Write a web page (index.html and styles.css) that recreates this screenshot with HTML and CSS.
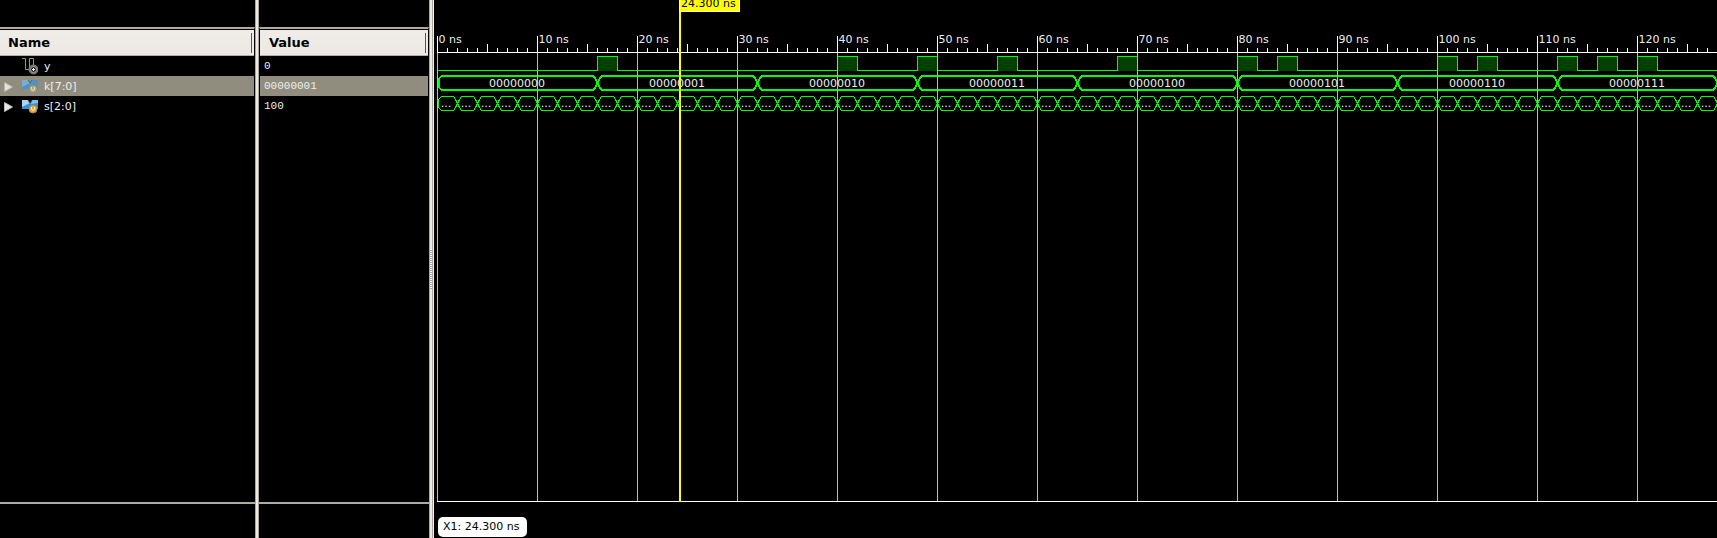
FILE: index.html
```
<!DOCTYPE html>
<html lang="en">
<head>
<meta charset="utf-8">
<title>Waveform viewer</title>
<link rel="stylesheet" href="styles.css">
</head>
<body>
<main class="viewer">
  <section class="pane names">
    <h2 class="head">Name</h2>
    <ul class="rows">
      <li class="row">
        <span class="twist"></span>
        <svg class="icon" width="16" height="18" viewBox="0 0 16 18"><path d="M0 1.500H3.500V12.500H7.500V1.500H11.500V9" fill="none" stroke="#6fae5c"/><circle cx="11.500" cy="12.500" r="4.500" fill="#666" stroke="#888"/><circle cx="11.500" cy="12.500" r="3" fill="#222" stroke="#aaa"/><path d="M10 12.500H13M11.500 11V14" stroke="#fff"/></svg>
        <span class="label">y</span>
      </li>
      <li class="row selected">
        <button class="twist" aria-label="Expand k"><svg width="9" height="10" viewBox="0 0 9 10"><path d="M.5 .5L8.500 5L.5 9.500Z" fill="#e4e2de" stroke="#bbb8b0"/></svg></button>
        <svg class="icon" width="16" height="18" viewBox="0 0 16 18"><path d="M0 3H6L8 6L10 3H16V12H0Z" fill="#4f93c4"/><path d="M0 3H6L8 6L0 10Z" fill="#79aed2"/><path d="M6 3L8 6L10 3" fill="none" stroke="#456a80"/><circle cx="11" cy="12" r="4" fill="#b3a678" stroke="#8b8d87"/><path d="M9.500 10V12.500Q11 14.500 12.500 12.500V10" fill="none" stroke="#e2ddc5"/></svg>
        <span class="label">k[7:0]</span>
      </li>
      <li class="row">
        <button class="twist" aria-label="Expand s"><svg width="9" height="10" viewBox="0 0 9 10"><path d="M.5 .5L8.500 5L.5 9.500Z" fill="#e8e8e8" stroke="#bbb"/></svg></button>
        <svg class="icon" width="16" height="18" viewBox="0 0 16 18"><path d="M0 3H6L8 6L10 3H16V12H0Z" fill="#2f8fd8"/><path d="M0 3H6L8 6L0 10Z" fill="#a8d5f2"/><path d="M10 3H16V6L9 7Z" fill="#7cc0ee"/><path d="M6 3L8 6L10 3" fill="none" stroke="#235"/><circle cx="11" cy="12" r="4" fill="#e3a93a" stroke="#a08a5c"/><path d="M9.500 10V12.500Q11 14.500 12.500 12.500V10" fill="none" stroke="#fff4cd"/></svg>
        <span class="label">s[2:0]</span>
      </li>
    </ul>
    <div class="foot"></div>
  </section>
  <div class="splitter"></div>
  <section class="pane values">
    <h2 class="head">Value</h2>
    <ul class="rows">
      <li class="row">0</li>
      <li class="row selected">00000001</li>
      <li class="row">100</li>
    </ul>
    <div class="foot"></div>
  </section>
  <div class="splitter grip"></div>
  <section class="wave">
    <svg class="plot" id="plot" role="img" aria-label="Signal waveforms"></svg>
    <div class="status"><span class="marker">X1: 24.300 ns</span></div>
  </section>
</main>
<script src="wave.js"></script>
</body>
</html>
```
FILE: styles.css
```
body {
  margin: 0;
  background: #000;
  color: #eee;
  font-family: "DejaVu Sans", sans-serif;
  font-size: 11px;
}
.viewer {
  display: flex;
  height: 100vh;
  overflow: hidden;
}
.pane {
  display: flex;
  flex-direction: column;
  box-sizing: border-box;
  padding-top: 27px;
}
.names { flex: 0 0 255px; }
.values { flex: 0 0 170px; }
.head {
  box-sizing: border-box;
  height: 29px;
  margin: 0;
  padding-left: 8px;
  border-top: 2px solid #b0aaa2;
  background:
    linear-gradient(#555, #555) right 2px top 4px / 1px 20px no-repeat,
    linear-gradient(#000, #000) top / 100% 1px no-repeat,
    linear-gradient(#b4aea6, #b4aea6) bottom / 100% 1px no-repeat,
    linear-gradient(#f0ede9, #ece9e4);
  border-right: 1px solid #000;
  color: #000;
  font-size: 13px;
  line-height: 27px;
}
.values .head {
  border-left: 1px solid #000;
  padding-left: 9px;
}
.rows {
  flex: 1;
  margin: 0;
  padding: 0;
  list-style: none;
}
.row {
  display: flex;
  align-items: center;
  height: 20px;
  margin-right: 1px;
}
.values .row {
  margin-left: 1px;
  padding-left: 4px;
  font-family: "Liberation Mono", monospace;
}
.selected { background: #918d7e; }
.twist {
  display: flex;
  width: 22px;
  padding: 2px 0 0 4px;
  box-sizing: border-box;
  border: 0;
  background: none;
}
.icon { margin-right: 6px; }
.foot {
  height: 34px;
  border-top: 2px solid #b0aaa2;
}
.splitter {
  flex: 0 0 4px;
  box-sizing: border-box;
  border: solid #aaa49c;
  border-width: 0 1px;
  background: #eeebe6;
}
.grip {
  background: repeating-linear-gradient(#fff 0 1px, #aaa49c 1px 2px) center / 100% 40px no-repeat #eeebe6;
}
.wave {
  flex: 1;
  min-width: 0;
  display: flex;
  flex-direction: column;
  padding-left: 3px;
  border-left: 1px solid #f4f2ee;
}
.plot {
  display: block;
  width: 100%;
  flex: 1;
  min-height: 0;
  shape-rendering: crispEdges;
}
.plot text {
  fill: #eee;
  font-size: 11px;
}
.axis { stroke: #fff; }
.grid { stroke: #bbb; }
.line { fill: none; stroke: #0f0; }
.bus { stroke-width: 2; }
.pulse { fill: #004000; }
.cursor { stroke: #ff0; stroke-width: 2; }
.flag { fill: #ff0; stroke: #ffffa0; }
.plot .flag-text { fill: #000; }
.middle { text-anchor: middle; }
.status {
  height: 21px;
  padding: 15px 0 0 1px;
}
.marker {
  display: inline-block;
  padding: 0 8px 0 5px;
  border-radius: 5px;
  background: #fff;
  color: #000;
  line-height: 20px;
}
```
FILE: wave.js
```
const plot = document.getElementById('plot');
const SCALE = 10;
const END = 128;
const CURSOR = 24.3;
const AXIS_Y = 52.5;

function add(tag, attrs, text) {
  const el = document.createElementNS('http://www.w3.org/2000/svg', tag);
  for (const key in attrs) el.setAttribute(key, attrs[key]);
  if (text) el.textContent = text;
  plot.appendChild(el);
}
const xAt = ns => ns * SCALE + 0.5;
const bottom = plot.getBoundingClientRect().height - 0.5;

// Single-bit signal y: times at which it goes high for 2 ns
const highs = [16, 40, 48, 56, 68, 80, 84, 100, 104, 112, 116, 120];
let d = 'M0.5 70.5';
for (const t of highs) {
  add('rect', { class: 'pulse', x: xAt(t), y: 56, width: 2 * SCALE, height: 15 });
  d += `H${xAt(t)}V56.5H${xAt(t + 2)}V70.5`;
}
add('path', { class: 'line', d: d + `H${xAt(END)}` });

// Bus values: cells whose curved ends cross at each change
function bus(step, top, base, cls) {
  const mid = (top + base) / 2;
  for (let t = 0; t < END; t += step) {
    const a = xAt(t), b = xAt(t + step);
    const l = t === 0 ? a + 1 : a;
    const half = t === 0 ? 1 : 2;
    add('path', { class: cls, d: `M${l} ${mid}L${a + half} ${mid - 4}L${a + 4} ${top}H${b - 4}L${b - 2} ${mid - 4}L${b} ${mid}L${b - 2} ${mid + 4}L${b - 4} ${base}H${a + 4}L${a + half} ${mid + 4}Z` });
  }
}
bus(16, 76, 90, 'line bus');
bus(2, 96.5, 110.5, 'line');

// Time grid and ruler
for (let t = 0; t < END; t++) {
  const x = xAt(t);
  const major = t % 10 === 0;
  if (major) {
    add('line', { class: 'grid', x1: x, x2: x, y1: 53, y2: bottom });
    add('text', { x: x + 1, y: 43 }, `${t} ns`);
  }
  add('line', { class: 'axis', x1: x, x2: x, y1: major ? 36 : t % 5 === 0 ? 44 : 48, y2: 52 });
}
add('line', { class: 'axis', x1: 0, x2: '100%', y1: AXIS_Y, y2: AXIS_Y });
add('line', { class: 'axis', x1: 0, x2: '100%', y1: bottom, y2: bottom });

for (let i = 0; i < 8; i++) {
  add('text', { class: 'middle', x: i * 160 + 80, y: 87 }, i.toString(2).padStart(8, '0'));
}
for (let t = 0; t < END; t += 2) {
  add('text', { class: 'middle', x: (t + 1) * SCALE - 1, y: 107 }, '...');
}

// Cursor and its time flag
const cx = Math.round(CURSOR * SCALE);
add('line', { class: 'cursor', x1: cx, x2: cx, y1: 0, y2: bottom });
add('rect', { class: 'flag', x: cx - 0.5, y: -8.5, width: 60, height: 20 });
add('text', { class: 'flag-text', x: cx + 1, y: 7 }, '24.300 ns');
```
